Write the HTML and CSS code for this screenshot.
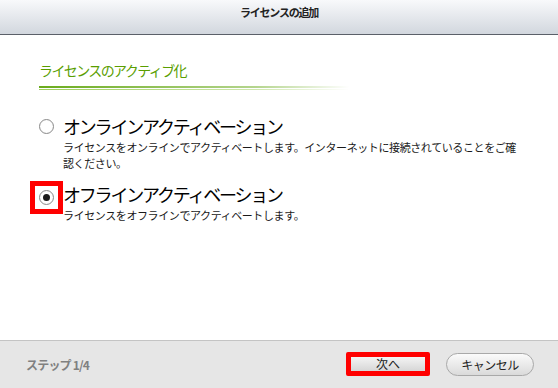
FILE: index.html
```html
<!DOCTYPE html>
<html lang="ja">
<head>
<meta charset="UTF-8">
<title>ライセンスの追加</title>
<link rel="stylesheet" href="styles.css">
</head>
<body>
<div class="dialog">
    <div class="titlebar">ライセンスの追加</div>

    <div class="content">
        <h2 class="section-title">ライセンスのアクティブ化</h2>
        <div class="rule"></div>

        <div class="option first">
            <span class="radio-wrap"><span class="radio"></span></span>
            <div class="option-body">
                <div class="option-label">オンラインアクティベーション</div>
                <div class="option-desc">ライセンスをオンラインでアクティベートします。インターネットに接続されていることをご確<br>認ください。</div>
            </div>
        </div>

        <div class="option">
            <span class="radio-wrap marked"><span class="radio checked"></span></span>
            <div class="option-body">
                <div class="option-label">オフラインアクティベーション</div>
                <div class="option-desc">ライセンスをオフラインでアクティベートします。</div>
            </div>
        </div>
    </div>

    <div class="footer">
        <span class="step">ステップ 1/4</span>
        <div class="buttons">
            <button class="btn btn-next">次へ</button>
            <button class="btn btn-cancel">キャンセル</button>
        </div>
    </div>
</div>
</body>
</html>
```

FILE: styles.css
```css
body {
    margin: 0;
    padding: 0;
    background: #fff;
    font-family: "Noto Sans CJK JP", "Noto Sans", sans-serif;
    color: #111;
}
.dialog {
    width: 558px;
    height: 388px;
    display: flex;
    flex-direction: column;
    overflow: hidden;
}
.titlebar {
    height: 35px;
    border-bottom: 1px solid #5b6069;
    background: linear-gradient(#f8f9fb, #d2d7de);
    text-align: center;
    font-size: 11px;
    font-weight: bold;
    letter-spacing: -1.2px;
    line-height: 16px;
    padding-top: 4px;
    box-sizing: border-box;
    color: #222;
}
.content {
    flex: 1;
    padding: 27px 0 0 39px;
}
.section-title {
    margin: 0;
    font-size: 14px;
    font-weight: normal;
    line-height: 16px;
    letter-spacing: -1.6px;
    color: #5a9e00;
}
.rule {
    width: 310px;
    height: 4px;
    margin-top: 8px;
    background-image:
        linear-gradient(to right, rgba(255,255,255,0) 0%, rgba(255,255,255,0.5) 70%, #fff),
        linear-gradient(#6aab1c 0 2px, transparent 2px 3px, #9fd05c 3px 4px);
}
.option {
    display: flex;
    margin-top: 10px;
}
.option.first {
    margin-top: 23px;
}
.radio-wrap {
    flex: none;
    width: 15px;
    height: 15px;
    margin-top: 6px;
}
.radio-wrap.marked {
    margin-top: 9px;
    outline: 5px solid #f00;
    outline-offset: 4px;
}
.radio {
    display: block;
    width: 13px;
    height: 13px;
    border: 1px solid #8a8a8a;
    border-radius: 50%;
    background: radial-gradient(circle, #fff 55%, #ececec);
    position: relative;
}
.radio.checked::after {
    content: "";
    position: absolute;
    left: 3px;
    top: 3px;
    width: 7px;
    height: 7px;
    border-radius: 50%;
    background: #1a1a1a;
}
.option-body {
    margin-left: 9px;
}
.option-label {
    font-size: 18px;
    line-height: 26px;
    letter-spacing: -2.2px;
    color: #000;
}
.option-desc {
    font-size: 11px;
    line-height: 16px;
    letter-spacing: -0.4px;
    white-space: nowrap;
    color: #1a1a1a;
}
.footer {
    height: 47px;
    border-top: 1px solid #c4c4c4;
    background: #e6e6e6;
    display: flex;
    align-items: center;
    padding: 0 24px 0 26px;
}
.step {
    font-size: 12px;
    font-weight: bold;
    letter-spacing: -0.8px;
    color: #808080;
}
.buttons {
    margin-left: auto;
    display: flex;
    align-items: center;
    gap: 16px;
}
.btn {
    font-family: inherit;
    font-size: 12px;
    color: #222;
    padding: 0;
    cursor: pointer;
}
.btn-next {
    width: 84px;
    height: 24px;
    margin-top: -2px;
    border: 5px solid #f00;
    border-radius: 2px;
    background: linear-gradient(#f4f4f4, #d6d6d6);
    line-height: 12px;
}
.btn-cancel {
    width: 88px;
    height: 23px;
    border: 1px solid #a9a9a9;
    border-radius: 12px;
    background: linear-gradient(#fbfbfb, #dadada);
    letter-spacing: -0.5px;
}
```
